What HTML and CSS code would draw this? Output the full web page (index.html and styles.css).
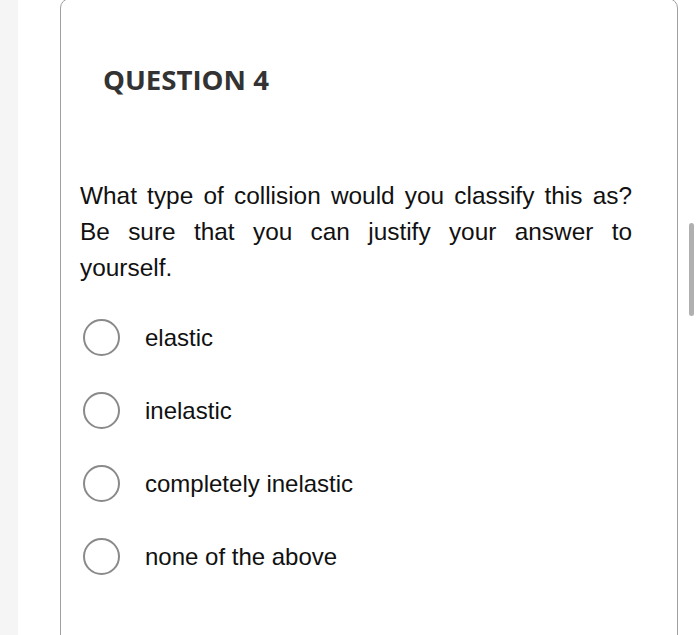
FILE: index.html
```html
<!DOCTYPE html>
<html>
<head>
<meta charset="utf-8">
<link rel="stylesheet" href="styles.css">
</head>
<body>
<div class="page">
  <div class="strip"></div>
  <div class="card">
    <h2 class="title">QUESTION 4</h2>
    <p class="prompt">What type of collision would you classify this as? Be sure that you can justify your answer to yourself.</p>
    <ul class="options">
      <li class="option"><span class="radio"></span><span class="label">elastic</span></li>
      <li class="option"><span class="radio"></span><span class="label">inelastic</span></li>
      <li class="option"><span class="radio"></span><span class="label">completely inelastic</span></li>
      <li class="option"><span class="radio"></span><span class="label">none of the above</span></li>
    </ul>
  </div>
  <div class="scroll"><div class="thumb"></div></div>
</div>
</body>
</html>
```
FILE: styles.css
```css
html, body {
  margin: 0;
  padding: 0;
  background: #ffffff;
  overflow: hidden;
}
.page {
  display: flex;
  width: 700px;
  height: 635px;
  overflow: hidden;
}
.strip {
  width: 18px;
  flex: none;
  background: #f5f5f5;
}
.card {
  flex: none;
  margin-left: 42px;
  margin-top: -2px;
  width: 618px;
  height: 700px;
  border: 1.5px solid #a0a0a0;
  border-radius: 10px;
  box-sizing: border-box;
  padding: 0 45px 0 19px;
}
.title {
  margin: 64px 0 0 23px;
  font-family: "Open Sans", sans-serif;
  font-weight: 700;
  font-size: 27.6px;
  line-height: 32px;
  color: #333333;
}
.prompt {
  margin: 83px 0 0 0;
  font-family: "Liberation Sans", Arial, sans-serif;
  font-size: 24.4px;
  line-height: 36px;
  color: #111111;
  text-align: justify;
}
.options {
  list-style: none;
  margin: 33px 0 0 0;
  padding: 0;
  display: flex;
  flex-direction: column;
  gap: 36px;
}
.option {
  display: flex;
  align-items: center;
  height: 37px;
}
.radio {
  width: 37px;
  height: 37px;
  box-sizing: border-box;
  border: 2.5px solid #8a8a8a;
  border-radius: 50%;
  margin-left: 3px;
  flex: none;
}
.label {
  margin-left: 25px;
  font-family: "Liberation Sans", Arial, sans-serif;
  font-size: 24px;
  color: #111111;
}
.scroll {
  flex: none;
  margin-left: 11px;
  padding-top: 223px;
}
.thumb {
  width: 5px;
  height: 93px;
  background: #b0b0b0;
  border-radius: 3px;
}
```
